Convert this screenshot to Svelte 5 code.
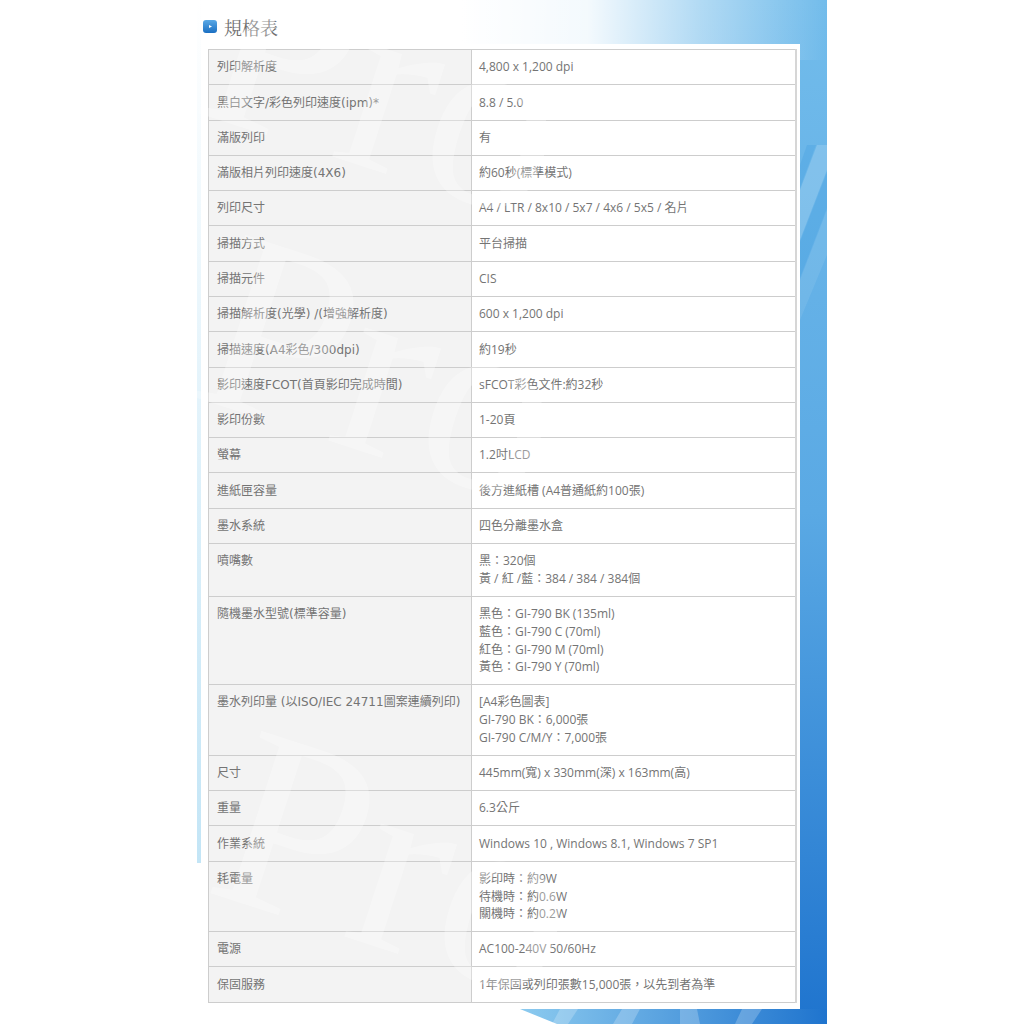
<script>
  const specs = [
    { label: "列印解析度", value: ["4,800 x 1,200 dpi"] },
    { label: "黑白文字/彩色列印速度(ipm)*", value: ["8.8 / 5.0"] },
    { label: "滿版列印", value: ["有"] },
    { label: "滿版相片列印速度(4X6)", value: ["約60秒(標準模式)"] },
    { label: "列印尺寸", value: ["A4 / LTR / 8x10 / 5x7 / 4x6 / 5x5 / 名片"] },
    { label: "掃描方式", value: ["平台掃描"] },
    { label: "掃描元件", value: ["CIS"] },
    { label: "掃描解析度(光學) /(增強解析度)", value: ["600 x 1,200 dpi"] },
    { label: "掃描速度(A4彩色/300dpi)", value: ["約19秒"] },
    { label: "影印速度FCOT(首頁影印完成時間)", value: ["sFCOT彩色文件:約32秒"] },
    { label: "影印份數", value: ["1-20頁"] },
    { label: "螢幕", value: ["1.2吋LCD"] },
    { label: "進紙匣容量", value: ["後方進紙槽 (A4普通紙約100張)"] },
    { label: "墨水系統", value: ["四色分離墨水盒"] },
    { label: "噴嘴數", value: ["黑：320個", "黃 / 紅 /藍：384 / 384 / 384個"] },
    { label: "隨機墨水型號(標準容量)", value: ["黑色：GI-790 BK (135ml)", "藍色：GI-790 C (70ml)", "紅色：GI-790 M (70ml)", "黃色：GI-790 Y (70ml)"] },
    { label: "墨水列印量 (以ISO/IEC 24711圖案連續列印)", value: ["[A4彩色圖表]", "GI-790 BK：6,000張", "GI-790 C/M/Y：7,000張"] },
    { label: "尺寸", value: ["445mm(寬) x 330mm(深) x 163mm(高)"] },
    { label: "重量", value: ["6.3公斤"] },
    { label: "作業系統", value: ["Windows 10 , Windows 8.1, Windows 7 SP1"] },
    { label: "耗電量", value: ["影印時：約9W", "待機時：約0.6W", "關機時：約0.2W"] },
    { label: "電源", value: ["AC100-240V 50/60Hz"] },
    { label: "保固服務", value: ["1年保固或列印張數15,000張，以先到者為準"] }
  ];

  const marks = [
    { left: 56, top: -141 },
    { left: 52, top: 143 },
    { left: 68, top: 639 }
  ];
</script>

<div class="page">
  <svg class="deco" viewBox="0 0 630 1024" aria-hidden="true">
    <polygon points="0,1009 323,1009 360,1024 0,1024" fill="#fff" />
    <g fill="#fff" fill-opacity="0.22">
      <polygon points="363,1009 381,1009 371,1024 355,1024" />
      <polygon points="425,1009 443,1009 435,1024 416,1024" />
      <polygon points="483,1009 500,1009 503,1024 483,1024" />
      <polygon points="545,1009 565,1009 555,1024 538,1024" />
      <polygon points="620,145 630,145 630,170 603,240 603,190" fill-opacity="0.16" />
      <polygon points="630,210 603,280 603,320 630,255" fill-opacity="0.08" />
    </g>
    <g fill="#2f8fdc" fill-opacity="0.2">
      <polygon points="610,145 619,145 603,188 603,165" />
      <polygon points="630,172 603,242 603,278 630,208" />
    </g>
  </svg>
  <div class="edge"></div>

  <h2 class="title">
    <svg class="title-icon" viewBox="0 0 14 14" aria-hidden="true">
      <defs>
        <linearGradient id="iconFill" x1="0" y1="0" x2="0" y2="1">
          <stop offset="0" stop-color="#5aa9e6" />
          <stop offset="1" stop-color="#1b6fc2" />
        </linearGradient>
      </defs>
      <rect width="14" height="13" rx="3" fill="url(#iconFill)" />
      <polygon points="6,5 9,6.5 6,8" fill="#fff" />
    </svg>
    規格表
  </h2>

  <div class="sheet">
    <table>
      <tbody>
        {#each specs as row}
          <tr>
            <th>{row.label}</th>
            <td>
              {#each row.value as line}
                <div>{line}</div>
              {/each}
            </td>
          </tr>
        {/each}
      </tbody>
    </table>
    {#each marks as m}
      <span class="mark" style="left: {m.left}px; top: {m.top}px">Pro</span>
    {/each}
  </div>
</div>

<style>
  :global(body) {
    margin: 0;
    background: #fff;
    overflow: hidden;
  }

  .page {
    position: relative;
    box-sizing: border-box;
    width: 630px;
    height: 1024px;
    margin-left: 197px;
    overflow: hidden;
    background:
      linear-gradient(90deg, #fff 42%, rgba(255, 255, 255, 0.92) 62%, rgba(255, 255, 255, 0.45) 80%, rgba(255, 255, 255, 0) 100%) 0 0 / 100% 60px no-repeat,
      linear-gradient(90deg, #8fcdf0 50%, #1f74ce 100%) 0 100% / 100% 15px no-repeat,
      linear-gradient(180deg, #72bceb 0, #5aa9e4 50%, #1f74ce 100%);
  }

  .deco {
    position: absolute;
    inset: 0;
    width: 630px;
    height: 1024px;
  }

  .edge {
    position: absolute;
    left: 0;
    top: 0;
    width: 4px;
    height: 1024px;
    background: linear-gradient(180deg, #fff 0, #c3e5f6 863px, #fff 863px);
  }

  .title {
    position: relative;
    display: flex;
    align-items: center;
    gap: 7px;
    box-sizing: border-box;
    height: 44px;
    margin: 0;
    padding: 10px 0 0 6px;
    font: 400 18px/1 "Noto Serif CJK TC", "Noto Sans CJK TC", serif;
    color: #6f6f6f;
  }

  .title-icon {
    width: 14px;
    height: 14px;
  }

  .sheet {
    position: relative;
    width: 599px;
    margin-left: 4px;
    padding: 5px 3px 6px 7px;
    box-sizing: border-box;
    background: #fff;
  }

  table {
    width: 589px;
    border-collapse: collapse;
    table-layout: fixed;
    font-size: 12px;
    line-height: 17.65px;
    color: #747474;
    border-top: 1px solid #cdcdcd;
    border-right: 2px solid #d6d6d6;
    border-left: 1px solid #cfcfcf;
  }

  th,
  td {
    padding: 8.32px 8px;
    border: 1px solid #cdcdcd;
    text-align: left;
    vertical-align: top;
    font-weight: 400;
  }

  th {
    width: 246px;
    padding-top: 9.32px;
    padding-bottom: 7.32px;
    background: #f3f3f3;
    font-family: "DejaVu Sans", "Noto Sans CJK TC", sans-serif;
    white-space: nowrap;
  }

  td {
    padding-left: 7px;
    font-family: "Open Sans", "Noto Sans CJK TC", sans-serif;
  }

  .mark {
    position: absolute;
    font: 400 260px/1 "Liberation Serif", serif;
    color: #fff;
    opacity: 0.28;
    transform: rotate(18deg);
    transform-origin: left top;
    pointer-events: none;
  }
</style>
